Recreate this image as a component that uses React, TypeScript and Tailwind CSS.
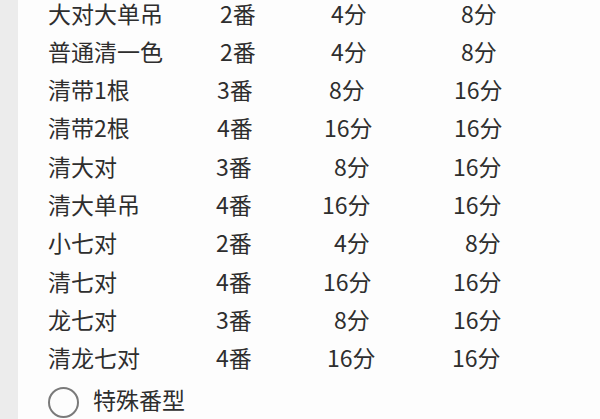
import React from "react";

type Row = {
  name: string;
  fan: string;
  a: string;
  b: string;
  o1: string;
  o2: string;
  o3: string;
};

const rows: Row[] = [
  { name: "大对大单吊", fan: "2番", a: "4分", b: "8分", o1: "pl-[4px]", o2: "pl-[9px]", o3: "pl-[9px]" },
  { name: "普通清一色", fan: "2番", a: "4分", b: "8分", o1: "pl-[4px]", o2: "pl-[9px]", o3: "pl-[9px]" },
  { name: "清带1根", fan: "3番", a: "8分", b: "16分", o1: "pl-[1px]", o2: "pl-[7px]", o3: "pl-[2px]" },
  { name: "清带2根", fan: "4番", a: "16分", b: "16分", o1: "pl-[1px]", o2: "pl-[2px]", o3: "pl-[2px]" },
  { name: "清大对", fan: "3番", a: "8分", b: "16分", o1: "pl-[0px]", o2: "pl-[12px]", o3: "pl-[1px]" },
  { name: "清大单吊", fan: "4番", a: "16分", b: "16分", o1: "pl-[0px]", o2: "pl-[0px]", o3: "pl-[1px]" },
  { name: "小七对", fan: "2番", a: "4分", b: "8分", o1: "pl-[0px]", o2: "pl-[12px]", o3: "pl-[13px]" },
  { name: "清七对", fan: "4番", a: "16分", b: "16分", o1: "pl-[0px]", o2: "pl-[1px]", o3: "pl-[1px]" },
  { name: "龙七对", fan: "3番", a: "8分", b: "16分", o1: "pl-[0px]", o2: "pl-[12px]", o3: "pl-[1px]" },
  { name: "清龙七对", fan: "4番", a: "16分", b: "16分", o1: "pl-[0px]", o2: "pl-[5px]", o3: "pl-[0px]" },
];

export default function App() {
  return (
    <div
      className="w-[600px] h-[419px] overflow-hidden flex bg-[#fdfdfd] text-[#2e2e2e]"
      style={{ fontFamily: '"Noto Sans CJK SC", "Noto Sans", sans-serif' }}
    >
      <div className="w-[18px] shrink-0 bg-[#ececec]" />
      <div className="flex-1 pl-[30px] flex flex-col -mt-[6px]">
        {rows.map((r) => (
          <div
            key={r.name}
            className="grid grid-cols-[168px_106px_130px_1fr] h-[39.1px] items-center text-[23px] leading-none"
          >
            <div>{r.name}</div>
            <div className={r.o1}>{r.fan}</div>
            <div className={r.o2}>{r.a}</div>
            <div className={r.o3}>{r.b}</div>
          </div>
        ))}
        <div className="flex items-center h-[39px] mt-[4px] text-[23px] leading-none">
          <div className="w-[31px] h-[31px] rounded-full border-2 border-[#7a7a7a] shrink-0 mt-[6px]" />
          <div className="ml-[14px]">特殊番型</div>
        </div>
      </div>
    </div>
  );
}
